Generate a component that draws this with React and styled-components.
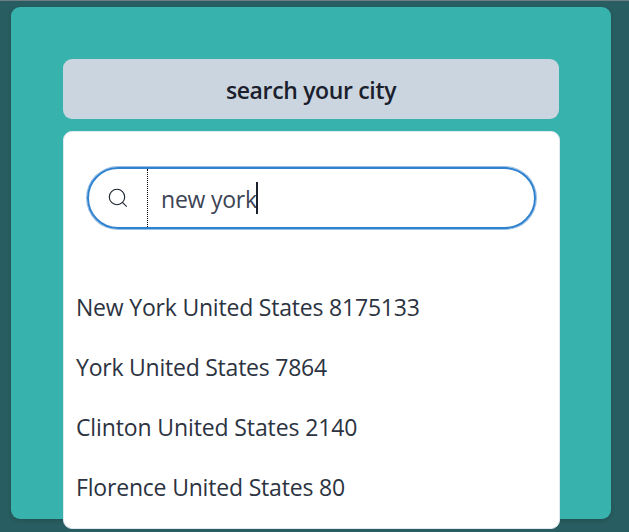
import React from "react";
import styled, { createGlobalStyle } from "styled-components";

const GlobalStyle = createGlobalStyle`
  *, *::before, *::after { box-sizing: border-box; }
  body {
    margin: 0;
    overflow: hidden;
    background: #285e61;
    color: #1a202c;
    font-family: "Segoe UI", "Open Sans", "Noto Sans", sans-serif;
  }
`;

const Page = styled.main`
  height: 532px;
  padding: 6px 18px 0 11px;
  border-top: 1px solid #6f7e84;
  overflow: hidden;
`;

const Card = styled.section`
  display: flex;
  flex-direction: column;
  gap: 12px;
  width: 600px;
  height: 512px;
  padding: 52px 51px 0 52px;
  border-radius: 9px;
  background: #38b2ac;
  box-shadow: 0 2px 4px rgba(0, 0, 0, 0.15);
`;

const MenuButton = styled.button`
  flex: none;
  width: 496px;
  height: 60px;
  padding: 1px 0 0;
  border: 0;
  border-radius: 9px;
  background: #cbd5e0;
  color: #1a202c;
  font-family: inherit;
  font-size: 23px;
  font-weight: 600;
  letter-spacing: ${({ $tracking }) => $tracking}px;
`;

const Menu = styled.div`
  flex: none;
  width: 497px;
  height: 398px;
  padding: 35px 0 0;
  border: 1px solid #e2e8f0;
  border-radius: 9px;
  background: #fff;
`;

const SearchField = styled.label`
  display: flex;
  width: 449px;
  height: 62px;
  margin: 0 0 48px 23px;
  border: 2px solid #3182ce;
  border-radius: 31px;
  box-shadow: 0 0 0 1px rgba(49, 130, 206, 0.5);
`;

const IconSlot = styled.span`
  display: flex;
  align-items: center;
  justify-content: center;
  width: 59px;
  border-right: 1px dotted #000;
`;

const Query = styled.span`
  display: flex;
  align-items: center;
  padding: 2px 0 0 13px;
  font-size: 23px;
  font-weight: 400;
  letter-spacing: ${({ $tracking }) => $tracking}px;
  color: #3c4454;
  white-space: pre;
`;

const Caret = styled.span`
  width: 2px;
  height: 32px;
  margin: -3px 0 0 -1px;
  background: #1a202c;
`;

const Results = styled.ul`
  margin: 0;
  padding: 0;
  list-style: none;
`;

const Result = styled.li`
  display: flex;
  align-items: center;
  height: 60px;
  padding-left: 12px;
  font-size: 23px;
  font-weight: 400;
  color: #2c3341;
  letter-spacing: ${({ $tracking }) => $tracking}px;
  white-space: pre;
`;

const SearchIcon = () => (
  <svg width="20" height="20" viewBox="0 0 20 20" fill="none" stroke="#1a202c" strokeWidth="1.1">
    <circle cx="9" cy="9" r="7.7" />
    <path d="M14.4 14.4 18.7 18.7" />
  </svg>
);

const cities = [
  { name: "New York", country: "United States", population: 8175133, tracking: -0.2 },
  { name: "York", country: "United States", population: 7864, tracking: -0.23 },
  { name: "Clinton", country: "United States", population: 2140, tracking: -0.12 },
  { name: "Florence", country: "United States", population: 80, tracking: -0.19 },
];

export default function App() {
  return (
    <>
      <GlobalStyle />
      <Page>
        <Card>
          <MenuButton $tracking={-0.35}>search your city</MenuButton>
          <Menu>
            <SearchField>
              <IconSlot><SearchIcon /></IconSlot>
              <Query $tracking={-0.22}>new york<Caret /></Query>
            </SearchField>
            <Results>
              {cities.map(({ name, country, population, tracking }) => (
                <Result key={name} $tracking={tracking}>{`${name} ${country} ${population}`}</Result>
              ))}
            </Results>
          </Menu>
        </Card>
      </Page>
    </>
  );
}
